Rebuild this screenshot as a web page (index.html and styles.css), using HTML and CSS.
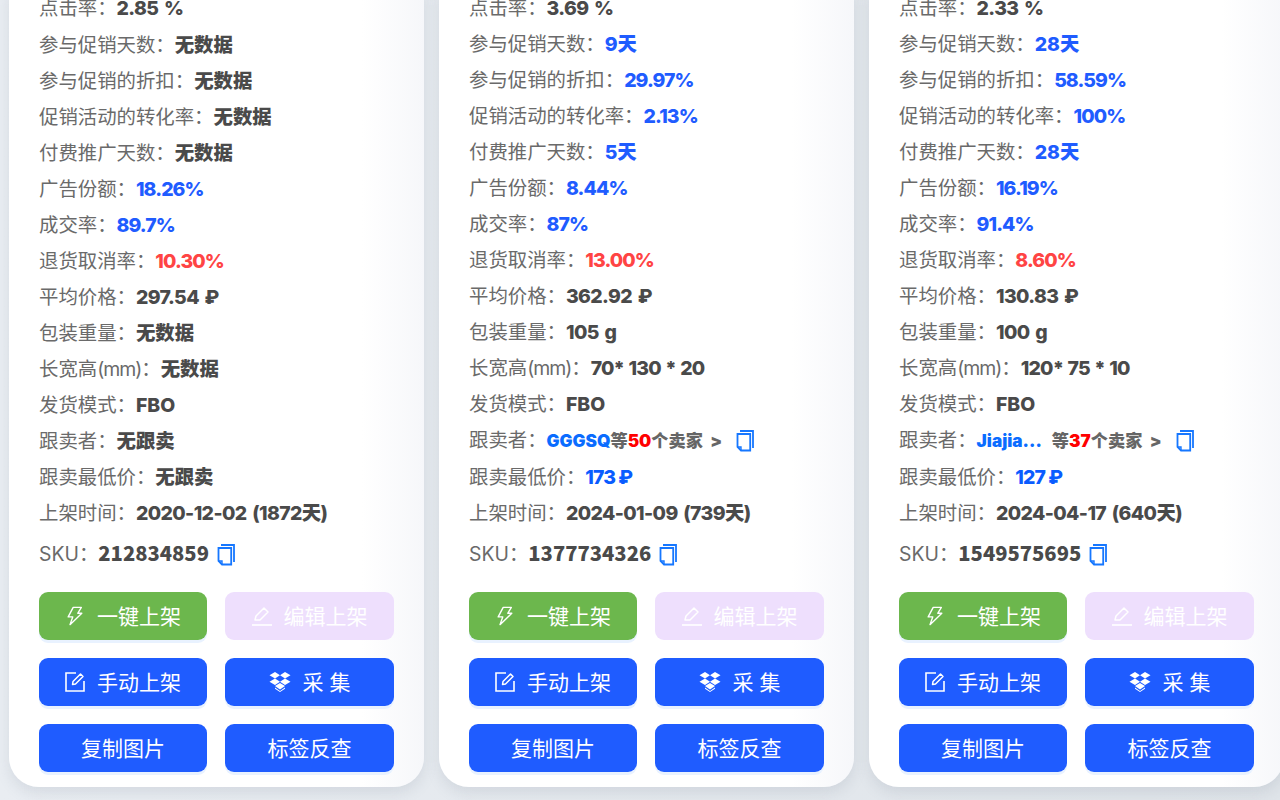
FILE: index.html
```html
<!DOCTYPE html>
<html lang="zh">
<head>
    <meta charset="UTF-8">
    <title>商品数据</title>
    <link rel="stylesheet" href="styles.css">
</head>
<body>
    <svg class="icon-defs" width="0" height="0">
        <symbol id="i-copy" viewBox="0 0 18 22">
            <path d="M4 1h13v17" fill="none" stroke="currentColor" stroke-width="1.8"/>
            <path d="M1.5 4h12.7v16.5H5L1.5 17z" fill="none" stroke="currentColor" stroke-width="1.8"/>
            <path d="M1.5 17H5v3.5" fill="none" stroke="currentColor" stroke-width="1.4"/>
        </symbol>
        <symbol id="i-bolt" viewBox="0 0 18 22">
            <path d="M7 1.5h9l-4 6.5h4.500L3.500 20.500 6.500 12H1.500z" fill="none" stroke="currentColor" stroke-width="1.5" stroke-linejoin="round"/>
        </symbol>
        <symbol id="i-pen" viewBox="0 0 20 20">
            <path d="M3 14l1-4 8-8 4 4-8 8z" fill="none" stroke="currentColor" stroke-width="1.5" stroke-linejoin="round"/>
            <path d="M0 19h20" stroke="currentColor" stroke-width="1.6"/>
        </symbol>
        <symbol id="i-edit" viewBox="0 0 20 20">
            <path d="M11 1H1v18h18V9" fill="none" stroke="currentColor" stroke-width="1.6"/>
            <path d="M8 9.500L15.500 2l2.500 2.500L10.500 12l-3 .5z" fill="none" stroke="currentColor" stroke-width="1.500" stroke-linejoin="round"/>
        </symbol>
        <symbol id="i-box" viewBox="0 0 22 20">
            <path d="M6 0l5 3.200-5 3.300-5.500-3.300zM16 0l5.500 3.200L16 6.500l-5-3.300zM.5 9.800L6 6.500l5 3.300-5 3.200zM21.500 9.800L16 13l-5-3.200 5-3.300zM6 14l5-3 5 3-5 3.500-5-3.500z" fill="currentColor"/>
            <path d="M6 15.500l5 3.500 5-3.500v1.200L11 20l-5-3.300z" fill="currentColor"/>
        </symbol>
    </svg>

    <div class="cards">
        <div class="card">
            <div class="rows">
                <p class="row tall">点击率：<b class="n">2.85 %</b></p>
                <p class="row">参与促销天数：<b>无数据</b></p>
                <p class="row">参与促销的折扣：<b>无数据</b></p>
                <p class="row">促销活动的转化率：<b>无数据</b></p>
                <p class="row">付费推广天数：<b>无数据</b></p>
                <p class="row">广告份额：<b class="n blue">18.26%</b></p>
                <p class="row">成交率：<b class="n blue">89.7%</b></p>
                <p class="row">退货取消率：<b class="n red">10.30%</b></p>
                <p class="row">平均价格：<b class="n">297.54 ₽</b></p>
                <p class="row">包装重量：<b>无数据</b></p>
                <p class="row">长宽高<span class="mm">(mm)</span>：<b>无数据</b></p>
                <p class="row">发货模式：<b>FBO</b></p>
                <p class="row">跟卖者：<b>无跟卖</b></p>
                <p class="row">跟卖最低价：<b>无跟卖</b></p>
                <p class="row">上架时间：<b class="n">2020-12-02 (1872天)</b></p>
                <p class="row sku">SKU：<b>212834859</b><svg class="copy"><use href="#i-copy"/></svg></p>
            </div>
            <div class="actions">
                <a class="btn green"><svg class="ico"><use href="#i-bolt"/></svg>一键上架</a>
                <a class="btn lilac"><svg class="ico"><use href="#i-pen"/></svg>编辑上架</a>
                <a class="btn"><svg class="ico"><use href="#i-edit"/></svg>手动上架</a>
                <a class="btn"><svg class="ico ico-box"><use href="#i-box"/></svg>采 集</a>
                <a class="btn">复制图片</a>
                <a class="btn">标签反查</a>
            </div>
        </div>

        <div class="card">
            <div class="rows">
                <p class="row">点击率：<b class="n">3.69 %</b></p>
                <p class="row">参与促销天数：<b class="blue">9天</b></p>
                <p class="row">参与促销的折扣：<b class="n blue">29.97%</b></p>
                <p class="row">促销活动的转化率：<b class="n blue">2.13%</b></p>
                <p class="row">付费推广天数：<b class="blue">5天</b></p>
                <p class="row">广告份额：<b class="n blue">8.44%</b></p>
                <p class="row">成交率：<b class="n blue">87%</b></p>
                <p class="row">退货取消率：<b class="n red">13.00%</b></p>
                <p class="row">平均价格：<b class="n">362.92 ₽</b></p>
                <p class="row">包装重量：<b class="n">105 g</b></p>
                <p class="row">长宽高<span class="mm">(mm)</span>：<b class="dim">70* 130 * 20</b></p>
                <p class="row">发货模式：<b>FBO</b></p>
                <p class="row seller tall">跟卖者：<b class="sellers"><span class="sname">GGGSQ</span>等<span class="scount">50</span>个卖家 &gt;</b><svg class="copy"><use href="#i-copy"/></svg></p>
                <p class="row">跟卖最低价：<b class="price">173 ₽</b></p>
                <p class="row">上架时间：<b class="n">2024-01-09 (739天)</b></p>
                <p class="row sku">SKU：<b>1377734326</b><svg class="copy"><use href="#i-copy"/></svg></p>
            </div>
            <div class="actions">
                <a class="btn green"><svg class="ico"><use href="#i-bolt"/></svg>一键上架</a>
                <a class="btn lilac"><svg class="ico"><use href="#i-pen"/></svg>编辑上架</a>
                <a class="btn"><svg class="ico"><use href="#i-edit"/></svg>手动上架</a>
                <a class="btn"><svg class="ico ico-box"><use href="#i-box"/></svg>采 集</a>
                <a class="btn">复制图片</a>
                <a class="btn">标签反查</a>
            </div>
        </div>

        <div class="card">
            <div class="rows">
                <p class="row">点击率：<b class="n">2.33 %</b></p>
                <p class="row">参与促销天数：<b class="blue">28天</b></p>
                <p class="row">参与促销的折扣：<b class="n blue">58.59%</b></p>
                <p class="row">促销活动的转化率：<b class="n blue">100%</b></p>
                <p class="row">付费推广天数：<b class="blue">28天</b></p>
                <p class="row">广告份额：<b class="n blue">16.19%</b></p>
                <p class="row">成交率：<b class="n blue">91.4%</b></p>
                <p class="row">退货取消率：<b class="n red">8.60%</b></p>
                <p class="row">平均价格：<b class="n">130.83 ₽</b></p>
                <p class="row">包装重量：<b class="n">100 g</b></p>
                <p class="row">长宽高<span class="mm">(mm)</span>：<b class="dim">120* 75 * 10</b></p>
                <p class="row">发货模式：<b>FBO</b></p>
                <p class="row seller tall">跟卖者：<b class="sellers"><span class="sname trunc">Jiajia...</span>等<span class="scount">37</span>个卖家 &gt;</b><svg class="copy"><use href="#i-copy"/></svg></p>
                <p class="row">跟卖最低价：<b class="price">127 ₽</b></p>
                <p class="row">上架时间：<b class="n">2024-04-17 (640天)</b></p>
                <p class="row sku">SKU：<b>1549575695</b><svg class="copy"><use href="#i-copy"/></svg></p>
            </div>
            <div class="actions">
                <a class="btn green"><svg class="ico"><use href="#i-bolt"/></svg>一键上架</a>
                <a class="btn lilac"><svg class="ico"><use href="#i-pen"/></svg>编辑上架</a>
                <a class="btn"><svg class="ico"><use href="#i-edit"/></svg>手动上架</a>
                <a class="btn"><svg class="ico ico-box"><use href="#i-box"/></svg>采 集</a>
                <a class="btn">复制图片</a>
                <a class="btn">标签反查</a>
            </div>
        </div>
    </div>
</body>
</html>
```

FILE: styles.css
```css
html, body {
    height: 100%;
}
body {
    margin: 0;
    overflow: hidden;
    background: linear-gradient(90deg, #e9edf2, #dfe4e9);
    font-family: Inter, "Noto Sans CJK SC", sans-serif;
    font-size: 19.4px;
    color: #6a6a6a;
}
.icon-defs {
    position: absolute;
}
.cards {
    display: flex;
    gap: 15px;
    margin-top: -10px;
    padding-left: 9px;
}
.card {
    flex: 0 0 415px;
    box-sizing: border-box;
    height: 797px;
    padding: 0 30px 15px;
    background: linear-gradient(90deg, #fff 85%, #f6f7fa);
    border-radius: 0 0 30px 30px;
    box-shadow: 0 6px 14px rgba(110, 125, 145, 0.16);
}
.rows {
    height: 602px;
}
.row {
    margin: 0;
    height: 36px;
    line-height: 36px;
    white-space: nowrap;
}
.row.tall {
    height: 37px;
}
.mm {
    letter-spacing: -1px;
}
.row b {
    font-weight: 800;
    color: #4a4a4a;
}
.row .n {
    letter-spacing: -0.6px;
    word-spacing: 2px;
}
.row .n.blue, .row .n.red {
    letter-spacing: -0.9px;
}
.row .dim {
    letter-spacing: -0.8px;
    word-spacing: 1px;
}
.row .blue {
    color: #1f5cff;
}
.row .red {
    color: #ff4444;
}
.row .price {
    color: #0a5cff;
    letter-spacing: -0.9px;
}
.sku {
    margin-top: 4px;
}
.sku b {
    font-family: "Noto Sans CJK SC", sans-serif;
    font-size: 20.2px;
    font-weight: 900;
}
.copy {
    width: 18px;
    height: 22px;
    margin-left: 8px;
    vertical-align: -5px;
    color: #1677ff;
}
.row .sellers {
    font-size: 17.2px;
    font-weight: 900;
    word-spacing: 4px;
    color: #666;
}
.row .sname {
    color: #0a6cff;
}
.row .scount {
    color: #f00;
}
.trunc {
    margin-right: 10px;
}
.seller .copy {
    margin-left: 14px;
}
.actions {
    display: grid;
    grid-template-columns: 168px 169px;
    grid-auto-rows: 48px;
    gap: 18px;
}
.btn {
    display: flex;
    align-items: center;
    justify-content: center;
    box-sizing: border-box;
    padding-bottom: 2px;
    border-radius: 9px;
    background: #1f5cff;
    box-shadow: 0 3px 0 #e9f2ff;
    color: #fff;
    font-size: 21px;
}
.btn.green {
    background: #6cb74d;
}
.btn.lilac {
    background: #eedffd;
    box-shadow: none;
}
.ico {
    width: 20px;
    height: 20px;
    margin: 2px 12px 0 0;
}
.ico-box {
    width: 22px;
}
```
